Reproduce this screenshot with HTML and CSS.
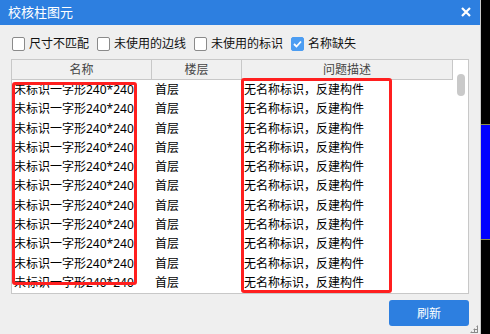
FILE: index.html
```html
<!DOCTYPE html>
<html lang="zh-CN">
<head>
    <meta charset="UTF-8">
    <meta name="viewport" content="width=device-width, initial-scale=1.0">
    <title>校核柱图元</title>
    <link rel="stylesheet" href="styles.css">
</head>
<body>
    <div class="dialog">
        <div class="titleBar">
            <span class="titleText">校核柱图元</span>
            <svg class="closeIcon" width="10" height="10" viewBox="0 0 10 10">
                <path d="M1 1 L9 9 M9 1 L1 9" stroke="#fff" stroke-width="2.2" fill="none"/>
            </svg>
        </div>
        <div class="options">
            <label class="opt"><span class="box"></span>尺寸不匹配</label>
            <label class="opt"><span class="box"></span>未使用的边线</label>
            <label class="opt"><span class="box"></span>未使用的标识</label>
            <label class="opt"><span class="box checked">
                <svg width="9" height="8" viewBox="0 0 9 8"><path d="M1 4 L3.5 6.5 L8 1.5" stroke="#fff" stroke-width="1.8" fill="none"/></svg>
            </span>名称缺失</label>
        </div>
        <div class="grid">
            <div class="headRow">
                <div class="hCell c1">名称</div>
                <div class="hCell c2">楼层</div>
                <div class="hCell c3">问题描述</div>
            </div>
            <div class="body" id="rows"></div>
            <div class="thumb"></div>
            <div class="mark markLeft"></div>
            <div class="mark markRight"></div>
        </div>
        <div class="footer">
            <button class="refresh">刷新</button>
        </div>
        <div class="grip"></div>
    </div>
    <div class="side">
        <div class="sideBlue"></div>
    </div>
    <script>
        // 填充表格行
        var html = "";
        for (var i = 0; i < 11; i++) {
            html += '<div class="row"><div class="cell c1">未标识一字形240*240</div>'
                  + '<div class="cell c2">首层</div>'
                  + '<div class="cell c3">无名称标识，反建构件</div></div>';
        }
        document.getElementById("rows").innerHTML = html;
    </script>
</body>
</html>
```
FILE: styles.css
```css
html,body{
    margin: 0px;
    padding: 0px;
    width: 490px;
    height: 334px;
    overflow: hidden;
}
body{
    display: flex;
    flex-direction: row;
    font-family: "Noto Sans", "Noto Sans CJK SC", sans-serif;
    font-size: 12px;
    color: #000;
}
.dialog{
    position: relative;
    width: 480px;
    height: 334px;
    background-color: #efefef;
    border-right: 1px solid #c9c9c9;
    display: flex;
    flex-direction: column;
}
.titleBar{
    height: 25px;
    background-color: #2d7fe0;
    display: flex;
    align-items: center;
    justify-content: space-between;
    padding: 0px 9px 0px 8px;
}
.titleText{
    color: #fff;
    font-size: 13px;
    line-height: 25px;
}
.closeIcon{
    display: block;
    margin-top: -2px;
}
.options{
    display: flex;
    flex-direction: row;
    margin-top: 12px;
    padding-left: 12px;
    height: 14px;
    gap: 8px;
}
.opt{
    display: flex;
    align-items: center;
    line-height: 14px;
    font-size: 12px;
    color: #111;
}
.box{
    width: 11px;
    height: 12px;
    border: 1px solid #8a8a8a;
    border-radius: 2px;
    background-color: #fff;
    margin-right: 4px;
    display: flex;
    align-items: center;
    justify-content: center;
}
.box.checked{
    background-color: #4c9df2;
    border-color: #4c9df2;
}
.grid{
    position: relative;
    margin-top: 8px;
    margin-left: 11px;
    width: 456px;
    height: 233px;
    border: 1px solid #c8c8c8;
    background-color: #fff;
    overflow: hidden;
}
.headRow{
    display: flex;
    flex-direction: row;
    height: 20px;
}
.hCell{
    box-sizing: border-box;
    height: 20px;
    line-height: 19px;
    background-color: #f0f0f0;
    border-right: 1px solid #c8c8c8;
    border-bottom: 1px solid #c8c8c8;
    text-align: center;
    color: #444;
}
.c1{ width: 140px; }
.c2{ width: 90px; }
.c3{ width: 211px; }
.row{
    display: flex;
    flex-direction: row;
    height: 19.3px;
    line-height: 19.3px;
}
.cell{
    box-sizing: border-box;
    white-space: nowrap;
    overflow: hidden;
}
.cell.c1{ padding-left: 2px; }
.cell.c2{ padding-left: 3px; }
.cell.c3{ padding-left: 2px; }
.thumb{
    position: absolute;
    left: 445px;
    top: 14px;
    width: 8px;
    height: 22px;
    border-radius: 4px;
    background-color: #c9c9c9;
}
.mark{
    position: absolute;
    border: 3px solid #ff1f1f;
    border-radius: 3px;
    box-sizing: border-box;
}
.markLeft{
    left: 0px;
    top: 22px;
    width: 125px;
    height: 203px;
}
.markRight{
    left: 229px;
    top: 18px;
    width: 151px;
    height: 215px;
}
.footer{
    display: flex;
    flex-direction: row;
    justify-content: flex-end;
    margin-top: 6px;
    padding-right: 11px;
}
.refresh{
    width: 80px;
    height: 26px;
    border: none;
    border-radius: 3px;
    background-color: #2d7fe0;
    color: #fff;
    font-family: "Noto Sans", "Noto Sans CJK SC", sans-serif;
    font-size: 12px;
    padding: 0px;
}
.grip{
    position: absolute;
    right: 2px;
    bottom: 1px;
    width: 8px;
    height: 8px;
    background-image: radial-gradient(circle, #8a8a8a 1px, transparent 1.2px);
    background-size: 3px 3px;
    clip-path: polygon(100% 0, 100% 100%, 0 100%);
}
.side{
    flex: 1;
    background-color: #000;
    display: flex;
    flex-direction: column;
    padding-top: 124px;
}
.sideBlue{
    height: 114px;
    background-color: #0000ff;
    border-top: 1px solid #8d8d45;
    border-bottom: 1px solid #8d8d45;
}
```
